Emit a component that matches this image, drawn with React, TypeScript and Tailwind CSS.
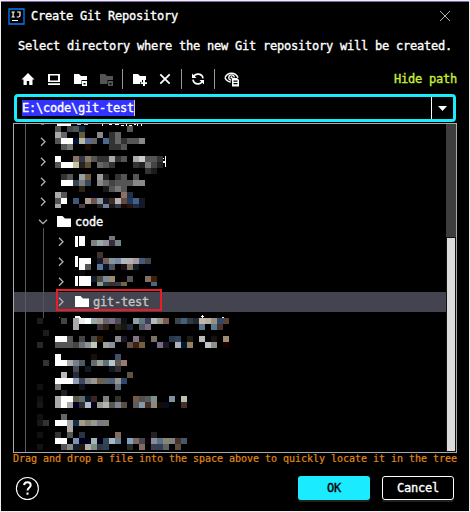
import React from "react";

// Pixelated labels: [top, first column, colours]. Columns are 6px wide and
// column 0 starts at the label edge; "-" leaves a cell empty.
type Strip = [number, number, string, number?];

const strips: Strip[] = [
  [126, 0, "555 - 444 4a5555 123 - - - - - - - 555"],
  [132, 0, "aaa 666 - - 665c44 - - 888 - 333 666"],
  [138, 0, "555 fff fff 013 b8b8a0 5b6b99 666 050510 4a6a88 333 666 333 555 555 888"],
  [144, 1, "555 777 - - 1a0d00 - - - 333 333 555"],
  [156, 0, "fff - - 8c7068 303848 8a7a6c 555 333 333 aaa 333 555 - aaa ccc 555 555 333"],
  [162, 0, "555 fff fff c5c4a0 282420 5a5038 - 666 555 333 - - - 333 222 777 444 222"],
  [168, 15, "333 1c1c1c"],
  [174, 1, "333 555 - 95a0a0 6f5f3f - 999 222 - 333 555 - 555"],
  [180, 1, "fff fff 384555 7c7c7c 384858 - 888 666 444 555 555 555 888 888"],
  [186, 4, "2c2414 - - - 1a1a1a 555 777 555"],
  [192, 0, "aaa 555 - - - - 000015 - - - - 8c7068 203048"],
  [198, 0, "555 fff - 405878 - aa9a90 6c5450 8c94a0 141828 403020 b4b4b8 644c38 1c3860 446084 141828"],
  [204, 0, "aaa - - - 443c40 - - 222 708098 181818 303848 180808 281408 202840 141828", 4],
  [236, 9, "777780", 4],
  [240, 6, "808080 98a8a8 909098 382c40 788484"],
  [252, 7, "40342c"],
  [258, 7, "181828 786058 80989c 7888a8 b0b8b8 b8b0b8 a89c9c 405c78 444"],
  [264, 5, "555 - 587898 001430 505058 - 1c1018 7c7868 101c24 - 000010"],
  [270, 4, "0c0c0c"],
  [276, 6, "102030 504840 788c98 988c70 - 080008 555 - - 807068 402000"],
  [282, 7, "889c94 303c48 402c30 343444 746444 - - - - 486888", 4],
  [318, -3, "1c1c1c - - - 444 - aaa eee fff 98a8a8 a09888 686070 787080 504858 0c1414 - 90a0a0 607880 403c58 b0bcb8 9c9488 785c50 - 404448 406080 303840 202830 c0b8a8 b8b0a0 989080 2c4870 5c4434"],
  [324, 3, "aaa - - - 403440 302010 - 282418 181810 202840 - 505868 7c7080 - - - - - - - - 587890 - 587890 48342c"],
  [330, -2, "1c1c20"],
  [336, 0, "fff fff 555 - 444 - 444 301800 - - 888 181828 - 807480 141010 - 7c7060 - - 283850 304058 - 1c1c14 - bbb - 181010 - a08c70"],
  [342, -3, "282828 - - 555 555 555 444 687078 909098 c0c8b8 - a0a498 8490a0 - - 605048 402010 706040 - 000010 786c80 181828 - b0b0b8 001838 988060 - - c0c0c8 909088 - 180000"],
  [354, 0, "fff - - - - - 181008 - - - 405068"],
  [360, -2, "333 - fff fff aaa 708090 505860 - 606c70 a0a098 607078 b0c8c8 605850 987c74"],
  [366, 3, "484850 - 101828 - - - 101828 303030"],
  [372, 1, "bbb - 202c40 - - - - - - - - 605440"],
  [378, 0, "fff fff fff 909cb4 404860 808488 989890 706048 586468 506078 989890 304870"],
  [384, -3, "101010 - - 777 - - - 101420 - - - - - 606c78"],
  [390, 1, "222"],
  [396, -3, "101010 - - aaa fff fff 5c5c48 606c70 001828 402020 - 7c8080 - 303028 - - 785840 505048 585c58 7c9090 - - 8090a0 - b8c0b0"],
  [402, -3, "141814 - - aaa fff aaa 000020 303030 b0bcc8 000018 989890 b8b4b0 585850 808494 585040 080000 585c60 8498a8 442c2c 908878 140c00 080c20 - - 443028"],
  [414, -3, "101010 - - - 666"],
  [420, -3, "181818 333 - fff fff aaa 103048 a89c88 888474 989890 787888 7c8070"],
  [426, 2, "aaa"],
  [432, -3, "101010 - - 333 - 555 - 283440 - - - - - 806c60 - - - - - 222"],
  [438, 0, "fff fff - 8090b0 000020 000018 a0b8b4 000018 304858 a8b8c4 688090 - 84a0c0 786860 484450 100008 888c98 587088 888870 808080 443428 445868 080000"],
  [444, -3, "101414 - - - 555 888 102030 201810 b0b0b0 7c8c84 303848 304050 - - - 282c28 - 806c60 - 403c50 304058 606068 - 584840"],
];

function Mosaic() {
  return (
    <svg className="pointer-events-none absolute left-0 top-0" width="432" height="328" viewBox="14 124 432 328" shapeRendering="crispEdges">
      {strips.map(([y, start, cells, h]) =>
        cells.split(" ").map((c, i) =>
          c === "-" ? null : (
            <rect key={`${y}-${i}`} x={55 + (start + i) * 6} y={y} width="6" height={h ?? 6} fill={`#${c}`} />
          )
        )
      )}
      <path fill="#fff" d="M57 124h14v2H57zM102 124h1v2h-1zM109 124h3v1h-3zM115 124h4v1h-4zM121 125h3v1h-3zM126 124h1v2h-1zM129 125h3v1h-3zM134 124h2v1h-2zM137 124h1v2h-1zM141 124h1v2h-1z" />
      <path fill="#aac8ff" d="M77 124h4v1h-4zM84 124h4v1h-4z" />
      <path fill="#777" d="M41 124h3v1h-3zM59 317h1v1h-1z" />
      <path fill="#fff" d="M165 156h1v11h-1zM163 158h1v1h-1zM163 161h2v2h-2zM75 236h3v11h-3zM79 236h6v10h-6zM75 256h3v11h-3zM79 258h12v6H79zM79 264h6v6h-6zM75 276h3v10h-3zM79 276h12v10H79zM75 316h5v1h-5zM75 317h6v1h-6zM201 316h3v1h-3zM202 315h1v3h-1zM222 317h2v1h-2z" />
    </svg>
  );
}

function Chevron({ open = false }: { open?: boolean }) {
  return (
    <svg width="10" height="10" viewBox="0 0 10 10" fill="none" stroke="#b4b4b4" strokeWidth="1.3" className="shrink-0">
      <path d={open ? "M1 2.7 5 6.7 9 2.7" : "M3 .7 7 4.7 3 8.7"} />
    </svg>
  );
}

function Folder() {
  return (
    <svg width="14" height="12" viewBox="0 0 14 12" className="shrink-0">
      <path d="M0 0h5.5L8 2.5h6V11H0z" fill="#fff" />
    </svg>
  );
}

function FolderTool({ color = "#fff", plus = false }: { color?: string; plus?: boolean }) {
  return (
    <svg width="14" height="14" viewBox="0 0 14 14" fill={color}>
      {plus ? (
        <path d="M0 2h5l2 2h6v4H9v2H7v2H0zM10 8h2v2.3h2.3v1.8H12v2.2h-2v-2.2H7.7v-1.8H10z" />
      ) : (
        <path fillRule="evenodd" d="M0 2h5l2 2h6v4H7.500v4H0zM8 9h5v5H8zM9.500 11v1.500h2V11z" />
      )}
    </svg>
  );
}

function Divider() {
  return <span className="h-5 w-px bg-[#999]" />;
}

function Toolbar() {
  return (
    <div className="flex h-5 items-center pl-5">
      <svg width="14" height="14" viewBox="0 0 14 14" fill="#fff">
        <path d="M7 1 .5 7.5h2V13h3.3V9h2.4v4h3.3V7.5h2z" />
      </svg>
      <svg className="ml-3" width="14" height="14" viewBox="0 0 14 14" fill="#fff">
        <path fillRule="evenodd" d="M1 2h12v8H1zM3 3.5v5h8v-5zM1 11.3h12V13H1z" />
      </svg>
      <span className="ml-[13px]"><FolderTool /></span>
      <span className="ml-3"><FolderTool color="#555" /></span>
      <span className="ml-2 flex"><Divider /></span>
      <span className="ml-[10px]"><FolderTool plus /></span>
      <svg className="ml-[11px]" width="14" height="14" viewBox="0 0 14 14" stroke="#fff" strokeWidth="1.8">
        <path d="m2.300 2.300 9.400 9.400m0-9.400-9.400 9.400" />
      </svg>
      <span className="ml-[9px] flex"><Divider /></span>
      <svg className="ml-[9px]" width="14" height="14" viewBox="0 0 14 14" fill="none" stroke="#fff" strokeWidth="1.7">
        <path d="M2.500 5A5 5 0 0 1 12 6.300M11.500 9A5 5 0 0 1 2 7.700" />
        <path d="M1 1.500V6h4.500zM13 12.500V8H8.500z" fill="#fff" stroke="none" />
      </svg>
      <span className="ml-[9px] flex"><Divider /></span>
      <svg className="ml-[9px]" width="16" height="16" viewBox="0 0 16 16" fill="none">
        <path d="M1 6.700C3.500.700 11.500.700 14 6.700M1 6.700c1.200 2.600 3.200 4 5.800 4.300" stroke="#fff" strokeWidth="1.5" />
        <path d="M10.200 6.500A2.700 2.700 0 1 0 7.300 9.200" stroke="#fff" strokeWidth="1.3" />
        <circle cx="7.500" cy="6.400" r="1.100" fill="#fff" />
        <path fill="#fff" fillRule="evenodd" d="M8 7h5l2 2v6.500H8zM9.500 9.500v1.200h4V9.500zM9.500 12v1.200h4V12z" />
      </svg>
      <span className="ml-auto text-[#c9ee35]">Hide path</span>
    </div>
  );
}

function ChildRow() {
  return <div className="flex h-5 items-center pl-[42px]"><Chevron /></div>;
}

export default function App() {
  return (
    <div className="h-[512px] w-[470px] border border-[#eee] bg-black font-['DejaVu_Sans_Mono','Liberation_Mono',monospace] text-[12px] leading-5 tracking-[-0.224px] text-white [-webkit-text-stroke:0.35px_currentColor]">
      <div className="flex h-full flex-col border-t border-[#8068ad] pr-3 pl-3">
        <header className="-ml-[5px] mt-1 flex h-5 items-center">
          <svg width="17" height="17" viewBox="0 0 17 17" className="mt-[1px]">
            <path d="M1 1h15v15H1z" fill="#000" stroke="#087cfa" strokeWidth="1.3" />
            <path d="M3.5 4h3.3M5.1 4v5M3.5 9h3.3M9 4h3v3.5Q12 9 10.3 9H8.7M4 12.5h6" fill="none" stroke="#fff" strokeWidth="1.2" />
          </svg>
          <h1 className="ml-[6px]">Create Git Repository</h1>
          <svg className="ml-auto mr-[7px]" width="10" height="10" viewBox="0 0 10 10" stroke="#b0b0b0" strokeWidth="1">
            <path d="m0 0 10 10M10 0 0 10" />
          </svg>
        </header>
        <p className="mt-[10px] ml-[5px] h-5 whitespace-nowrap">Select directory where the new Git repository will be created.</p>
        <div className="mt-[13px] -ml-3"><Toolbar /></div>

        <div className="mt-[5px] ml-[1px] flex h-[28px] w-[442px] shrink-0 items-stretch rounded border-[3px] border-[#1aebff]">
          <div className="flex flex-1 items-center pl-[5px]">
            <span className="h-4 border-r border-[#ddd0a0] bg-[#3333ff] leading-4">E:\code\git-test</span>
          </div>
          <div className="flex w-[22px] items-center justify-center border-l border-white">
            <svg width="10" height="5" viewBox="0 0 10 5"><path d="M0 0h9L4.500 5z" fill="#fff" /></svg>
          </div>
        </div>

        <div className="relative mt-[1px] flex h-[330px] w-[444px] shrink-0 overflow-hidden border border-[#aaa]">
          <div className="flex flex-1 flex-col pt-2">
            <div className="flex h-5 items-center pl-6"><Chevron /></div>
            <div className="flex h-5 items-center pl-6"><Chevron /></div>
            <div className="flex h-5 items-center pl-6"><Chevron /></div>
            <div className="flex h-5 items-center pl-6"><Chevron /></div>
            <div className="flex h-5 items-center pl-6"><Chevron open /><span className="ml-[9px]"><Folder /></span><span className="ml-[4px]">code</span></div>
            <ChildRow />
            <ChildRow />
            <ChildRow />
            <div className="flex h-5 items-center bg-[#444350] pl-[42px] text-[#c4c4c4]"><Chevron /><span className="ml-[9px]"><Folder /></span><span className="ml-[4px]">git-test</span></div>
          </div>
          <div className="flex w-[10px] flex-col bg-[#3d3d3d] pt-[113px]">
            <div className="flex-1 border border-[#111] bg-[#dcdcdc]" />
          </div>
          <span className="absolute left-[11px] top-0 h-full w-px bg-[#5c5c5c]" />
          <span className="absolute left-[29px] top-[104px] h-[90px] w-px bg-[#555]" />
          <Mosaic />
          <span className="absolute left-[42px] top-[165px] h-[22px] w-[106px] border-2 border-[#ed1c24]" />
        </div>

        <p className="h-[14px] whitespace-nowrap text-[10px] leading-[12px] tracking-[-0.02px] text-[#e08818] [-webkit-text-stroke:0.2px_currentColor]">Drag and drop a file into the space above to quickly locate it in the tree</p>
        <footer className="mt-[9px] flex h-[26px] items-start">
          <svg className="ml-[2px]" width="25" height="25" viewBox="0 0 25 25" fill="none" stroke="#fff">
            <circle cx="12.4" cy="12.5" r="11" strokeWidth="1.1" />
            <path d="M9.1 9.1c.3-4 6.6-3.6 6.6-.1 0 2.7-3.2 2.7-3.2 5.5M12.5 16.4v2.3" strokeWidth="2" />
          </svg>
          <button className="ml-auto h-6 w-[72px] rounded-[3px] bg-[#1aebff] font-normal text-black shadow-[0_2px_0_#202020]">OK</button>
          <button className="ml-3 mr-[3px] h-6 w-[72px] rounded-[3px] border border-white leading-5 shadow-[0_2px_0_#202020]">Cancel</button>
        </footer>
      </div>
    </div>
  );
}
